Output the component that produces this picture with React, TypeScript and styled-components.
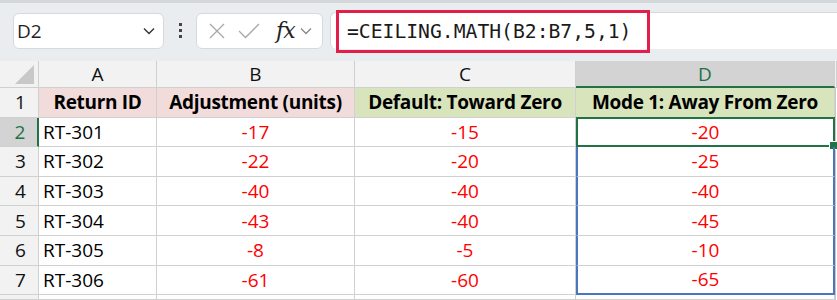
import styled, { createGlobalStyle } from 'styled-components';

const GlobalStyle = createGlobalStyle`
  body {
    margin: 0;
    background: #ffffff;
    font-family: 'Open Sans', 'Liberation Sans', sans-serif;
  }
`;

const columns = ['A', 'B', 'C', 'D'];
const headers = [
  { text: 'Return ID', tone: 'pink' },
  { text: 'Adjustment (units)', tone: 'pink' },
  { text: 'Default: Toward Zero', tone: 'green' },
  { text: 'Mode 1: Away From Zero', tone: 'green' },
];
const rows = [
  ['RT-301', -17, -15, -20],
  ['RT-302', -22, -20, -25],
  ['RT-303', -40, -40, -40],
  ['RT-304', -43, -40, -45],
  ['RT-305', -8, -5, -10],
  ['RT-306', -61, -60, -65],
];

export default function App() {
  return (
    <>
      <GlobalStyle />
      <Page>
        <FormulaBar>
          <NameBox>
            <NameText>D2</NameText>
            <Chevron width="14" height="14" viewBox="0 0 14 14">
              <path d="M2 4.5 L7 9.5 L12 4.5" fill="none" stroke="#333" strokeWidth="1.4" />
            </Chevron>
          </NameBox>
          <Dots>
            <Dot />
            <Dot />
            <Dot />
          </Dots>
          <FuncBox>
            <svg width="18" height="18" viewBox="0 0 18 18">
              <path d="M2 2 L16 16 M16 2 L2 16" stroke="#a8a8a8" strokeWidth="1.3" />
            </svg>
            <svg width="22" height="18" viewBox="0 0 22 18">
              <path d="M1 9 L7.5 15.5 L21 2" fill="none" stroke="#a8a8a8" strokeWidth="1.3" />
            </svg>
            <Fx>fx</Fx>
            <Chevron width="14" height="14" viewBox="0 0 14 14">
              <path d="M2 4.5 L7 9.5 L12 4.5" fill="none" stroke="#888" strokeWidth="1.3" />
            </Chevron>
          </FuncBox>
          <FormulaInput>
            <FormulaText>=CEILING.MATH(B2:B7,5,1)</FormulaText>
          </FormulaInput>
        </FormulaBar>

        <Sheet>
          <Corner>
            <CornerMark />
          </Corner>
          {columns.map((c) => (
            <ColHead key={c} $active={c === 'D'}>
              {c}
            </ColHead>
          ))}
          <ColHead $active={false} />

          <RowHead $active={false}>1</RowHead>
          {headers.map((h) => (
            <HeadCell key={h.text} $tone={h.tone}>
              {h.text}
            </HeadCell>
          ))}
          <Filler />

          {rows.map((r, i) => {
            const first = i === 0;
            const last = i === rows.length - 1;
            return [
              <RowHead key={`h${i}`} $active={first}>
                {i + 2}
              </RowHead>,
              <DataCell key={`a${i}`} $align="left" $red={false}>
                {r[0]}
              </DataCell>,
              <DataCell key={`b${i}`} $align="center" $red>
                {r[1]}
              </DataCell>,
              <DataCell key={`c${i}`} $align="center" $red>
                {r[2]}
              </DataCell>,
              <SpillCell key={`d${i}`} $active={first} $last={last}>
                {r[3]}
                {first && <FillHandle />}
              </SpillCell>,
              <Filler key={`f${i}`} />,
            ];
          })}

          <RowHead $active={false} />
          <DataCell $align="left" $red={false} />
          <DataCell $align="left" $red={false} />
          <DataCell $align="left" $red={false} />
          <DataCell $align="left" $red={false} />
          <Filler />
        </Sheet>
      </Page>
    </>
  );
}

const Page = styled.div`
  width: 837px;
  height: 300px;
  overflow: hidden;
  background: #fff;
`;

const FormulaBar = styled.div`
  height: 61px;
  box-sizing: border-box;
  border-top: 3px solid #d3d7da;
  background: #e9edf0;
  display: flex;
  align-items: center;
  padding-left: 13px;
  padding-bottom: 3px;
`;

const NameBox = styled.div`
  width: 151px;
  height: 36px;
  box-sizing: border-box;
  background: #fff;
  border: 1px solid #d6dadd;
  border-radius: 6px;
  display: flex;
  align-items: center;
  justify-content: space-between;
  padding: 0 7px 0 3px;
`;

const NameText = styled.span`
  font-family: 'Open Sans', sans-serif;
  font-size: 19px;
  color: #1f1f1f;
`;

const Chevron = styled.svg`
  flex: none;
`;

const Dots = styled.div`
  width: 32px;
  display: flex;
  flex-direction: column;
  align-items: center;
  gap: 3px;
`;

const Dot = styled.span`
  width: 3px;
  height: 3px;
  background: #444;
`;

const FuncBox = styled.div`
  width: 127px;
  height: 36px;
  box-sizing: border-box;
  background: #fff;
  border: 1px solid #d6dadd;
  border-radius: 6px;
  display: flex;
  align-items: center;
  padding: 0 6px 0 11px;
  gap: 12px;
`;

const Fx = styled.span`
  font-family: 'DejaVu Serif', 'Liberation Serif', serif;
  font-style: italic;
  font-size: 22px;
  color: #222;
  margin-left: 4px;
  margin-right: -8px;
  letter-spacing: -1px;
`;

const FormulaInput = styled.div`
  flex: 1;
  height: 36px;
  margin-left: 7px;
  background: #fff;
  border-top: 1px solid #d6dadd;
  border-left: 1px solid #d6dadd;
  border-radius: 6px 0 0 6px;
  display: flex;
  align-items: center;
`;

const FormulaText = styled.div`
  margin-left: 5px;
  width: 314px;
  height: 43px;
  box-sizing: border-box;
  border: 3px solid #e21f4b;
  display: flex;
  align-items: center;
  padding-left: 8px;
  font-family: 'DejaVu Sans Mono', 'Liberation Mono', monospace;
  font-size: 19.7px;
  color: #1a1a1a;
  white-space: nowrap;
`;

const Sheet = styled.div`
  display: grid;
  grid-template-columns: 39px 118px 198px 221px 259px 2px;
  grid-template-rows: 27px repeat(6, 29.6px) 29.5px 1fr;
  height: 239px;
  font-family: 'Open Sans', 'Liberation Sans', sans-serif;
  font-size: 19px;
  color: #000;
`;

const cellBase = `
  box-sizing: border-box;
  display: flex;
  align-items: center;
  border-right: 1px solid #d0d0d0;
  border-bottom: 1px solid #d0d0d0;
  white-space: nowrap;
  overflow: hidden;
`;

const Corner = styled.div`
  ${cellBase}
  background: #f2f2f2;
  justify-content: flex-end;
  align-items: flex-end;
  padding: 0 4px 3px 0;
`;

const CornerMark = styled.div`
  width: 0;
  height: 0;
  border-left: 19px solid transparent;
  border-bottom: 19px solid #c8c8c8;
`;

const ColHead = styled.div<{ $active: boolean }>`
  ${cellBase}
  justify-content: center;
  background: ${(p) => (p.$active ? '#d3d3d3' : '#f2f2f2')};
  color: ${(p) => (p.$active ? '#1e7145' : '#111')};
  border-bottom: ${(p) => (p.$active ? '2px solid #217346' : '1px solid #d0d0d0')};
  font-size: 19px;
`;

const RowHead = styled.div<{ $active: boolean }>`
  ${cellBase}
  justify-content: center;
  padding-left: 3px;
  background: ${(p) => (p.$active ? '#d3d3d3' : '#f2f2f2')};
  color: ${(p) => (p.$active ? '#1e7145' : '#111')};
  border-right: ${(p) => (p.$active ? '2px solid #217346' : '1px solid #d0d0d0')};
  font-size: 19px;
`;

const HeadCell = styled.div<{ $tone: string }>`
  ${cellBase}
  justify-content: center;
  font-weight: 700;
  letter-spacing: -0.3px;
  background: ${(p) => (p.$tone === 'pink' ? '#f2dcdb' : '#d8e4bc')};
`;

const DataCell = styled.div<{ $align: string; $red: boolean }>`
  ${cellBase}
  justify-content: ${(p) => (p.$align === 'left' ? 'flex-start' : 'center')};
  padding-left: ${(p) => (p.$align === 'left' ? '4px' : '0')};
  color: ${(p) => (p.$red ? '#ff0000' : '#000')};
`;

const SpillCell = styled.div<{ $active: boolean; $last: boolean }>`
  ${cellBase}
  position: relative;
  overflow: visible;
  justify-content: center;
  color: #ff0000;
  border-left: 2px solid ${(p) => (p.$active ? '#217346' : '#4a76c0')};
  border-right: 2px solid ${(p) => (p.$active ? '#217346' : '#4a76c0')};
  border-bottom: ${(p) =>
    p.$active ? '2px solid #217346' : p.$last ? '2px solid #4a76c0' : '1px solid #d0d0d0'};
  ${(p) => (p.$active ? 'border-top: 2px solid #217346; margin-top: -1px;' : '')}
`;

const FillHandle = styled.span`
  position: absolute;
  right: -5px;
  bottom: -5px;
  width: 7px;
  height: 7px;
  background: #217346;
  border: 1px solid #fff;
`;

const Filler = styled.div`
  background: #fff;
  border-left: 1px solid #c8c8c8;
`;
